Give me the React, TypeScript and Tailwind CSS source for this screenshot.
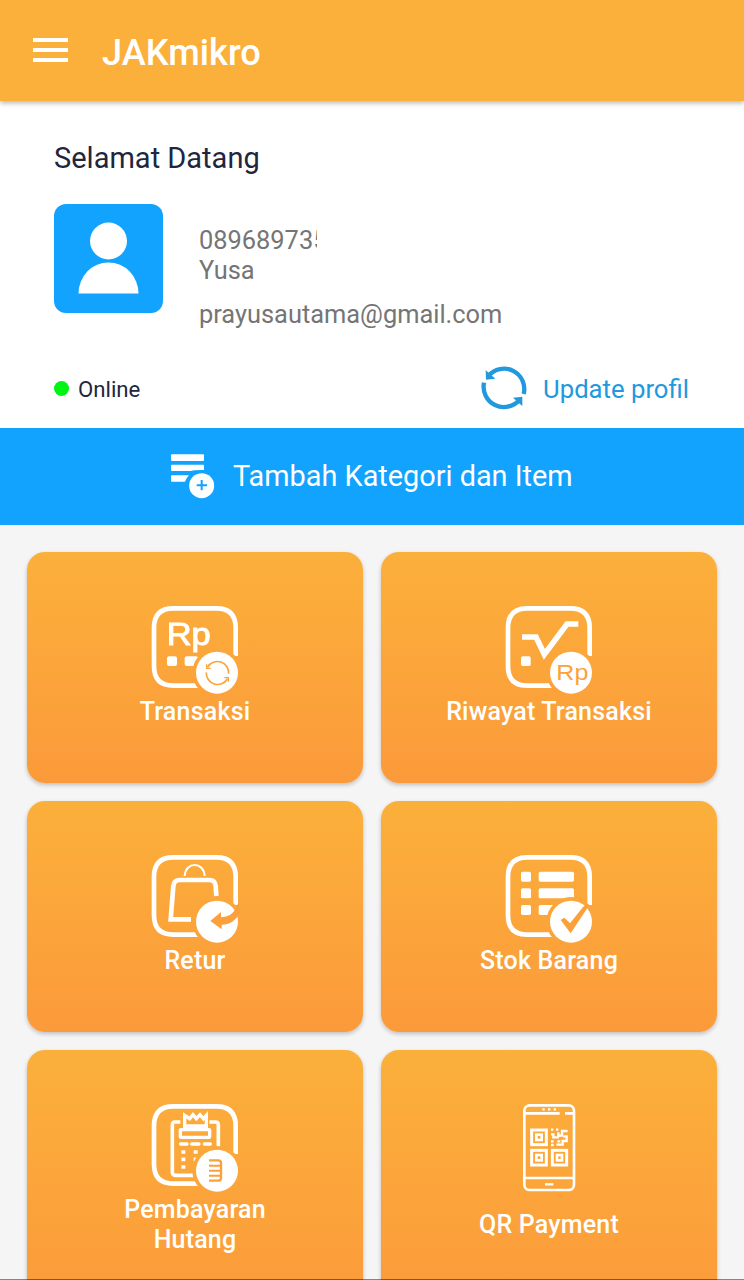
import type { ReactNode } from 'react';

type IconProps = { x: number; y: number; children: ReactNode };

function TileIcon({ x, y, children }: IconProps) {
  return (
    <svg className="size-[90px] shrink-0 overflow-visible" viewBox={`${x} ${y} 270 270`} fill="none" aria-hidden="true">
      {children}
    </svg>
  );
}

/* Rounded frame with a badge in its lower right corner; the content is cut away round the badge. */
function Badged({ id, x, y, children, badge }: IconProps & { id: string; badge: ReactNode }) {
  return (
    <TileIcon x={x} y={y}>
      <mask id={id} maskUnits="userSpaceOnUse" x={x} y={y} width="270" height="270">
        <rect x={x} y={y} width="270" height="270" fill="#fff" />
        <circle cx={x + 201} cy={y + 212} r="74" fill="#000" />
      </mask>
      <g mask={`url(#${id})`}>
        <path
          d={`M${x + 257} ${y + 162}V${y + 77}Q${x + 257} ${y + 19} ${x + 199} ${y + 19}H${x + 70}Q${x + 12} ${y + 19} ${x + 12} ${y + 77}V${y + 193}Q${x + 12} ${y + 251} ${x + 70} ${y + 251}H${x + 150}`}
          stroke="#fff"
          strokeWidth="14"
        />
        {children}
      </g>
      <circle cx={x + 201} cy={y + 212} r="63" fill="#fff" />
      {badge}
    </TileIcon>
  );
}

const TransaksiIcon = () => (
  <Badged
    id="cut-transaksi"
    x={30}
    y={21}
    badge={
      <g stroke="#fba33b" strokeWidth="5">
        <path d="M203 216A34 34 0 0 1 266 236" />
        <path d="M262 252A34 34 0 0 1 199 232" />
        <path d="M200 208v12h12M265 260v-12h-12" strokeWidth="4" />
      </g>
    }
  >
    <text x="80" y="150" fill="#fff" stroke="#fff" strokeWidth="3" className="font-['Liberation_Sans'] text-[94px]" textLength="132" lengthAdjust="spacingAndGlyphs">
      Rp
    </text>
    <rect x="81" y="184" width="30" height="29" rx="6" fill="#fff" />
    <rect x="134" y="184" width="40" height="29" rx="6" fill="#fff" />
  </Badged>
);

const RiwayatIcon = () => (
  <Badged
    id="cut-riwayat"
    x={27}
    y={21}
    badge={
      <text x="184" y="254" fill="#fba33b" className="font-['Liberation_Sans'] text-[68px]" textLength="96" lengthAdjust="spacingAndGlyphs">
        Rp
      </text>
    }
  >
    <path d="M81 126H123L148 178L216 87H250" stroke="#fff" strokeWidth="17" />
    <rect x="78" y="184" width="29" height="29" rx="5" fill="#fff" />
  </Badged>
);

const ReturIcon = () => (
  <Badged
    id="cut-retur"
    x={30}
    y={18}
    badge={<path d="M211 228L243 201V217Q277 214 286 191L296 172L300 202Q282 240 245 239V253Z" fill="#fba03a" />}
  >
    <path d="M153 223H92L100 123Q102 105 119 105H209Q225 105 227 123L229 153" stroke="#fff" strokeWidth="14" />
    <path d="M134 93C136 49 192 49 194 93" stroke="#fff" strokeWidth="6" />
  </Badged>
);

const StokIcon = () => (
  <Badged
    id="cut-stok"
    x={27}
    y={18}
    badge={<path d="M197 225L208 218L225 235L266 184L283 180L227 265Z" fill="#fba03a" />}
  >
    <g fill="#fff">
      <rect x="78" y="80" width="30" height="30" rx="5" />
      <rect x="131" y="80" width="106" height="30" rx="5" />
      <rect x="78" y="130" width="30" height="30" rx="5" />
      <rect x="131" y="130" width="106" height="30" rx="5" />
      <rect x="78" y="180" width="30" height="30" rx="5" />
      <rect x="131" y="180" width="50" height="30" rx="5" />
    </g>
  </Badged>
);

const HutangIcon = () => (
  <Badged
    id="cut-hutang"
    x={30}
    y={15}
    badge={
      <g stroke="#fba03a" strokeWidth="7">
        <path d="M207 196H235Q243 196 243 204V248Q243 257 234 257H207" />
        <path d="M207 212H241M207 227H241M207 242H241" strokeWidth="6" />
      </g>
    }
  >
    <g stroke="#fff">
      <path d="M121 81H105Q97 81 97 90V232Q97 241 106 241H165M208 81H227Q235 81 235 90V160" strokeWidth="11" />
      <path d="M134 102V61L149 71L159 59L169 71L180 59L190 71L199 61V102" strokeWidth="10" />
      <path d="M132 94H199" strokeWidth="13" />
      <rect x="121" y="104" width="88" height="23" rx="2" strokeWidth="10" />
      <path d="M122 147H141M155 147H177M193 147H211" strokeWidth="10" strokeLinecap="round" />
      <path d="M124 171H136M161 171H173M199 171H211M124 193H136M161 193H173M124 216H136" strokeWidth="11" />
    </g>
  </Badged>
);

const QrIcon = () => (
  <TileIcon x={27} y={15}>
    <g stroke="#fff">
      <rect x="88" y="31" width="149" height="254" rx="16" strokeWidth="8" />
      <path d="M88 55H194M210 55H237M88 249H237" strokeWidth="8" />
      <path d="M142 43H149M159 43H166M176 43H183" strokeWidth="7" />
      <path d="M150 268H175" strokeWidth="7" />
      <rect x="110" y="105" width="44" height="44" strokeWidth="9" />
      <rect x="124" y="119" width="16" height="16" strokeWidth="8" />
      <rect x="110" y="166" width="44" height="44" strokeWidth="9" />
      <rect x="124" y="180" width="16" height="16" strokeWidth="8" />
      <rect x="172" y="166" width="43" height="44" strokeWidth="9" />
      <rect x="186" y="180" width="15" height="16" strokeWidth="8" />
      <path d="M168 104H175M183 104H190M168 118H175V127H192M168 139H176M168 150H176M190 112V127M218 108H201V122H192M184 149H203V138H215V124H205M187 139H196" strokeWidth="7" />
    </g>
  </TileIcon>
);

function Tile({ icon, label, pad = 'px-4', height = 'h-[231px]', area = '' }: { icon: ReactNode; label: string; pad?: string; height?: string; area?: string }) {
  return (
    <button
      className={`flex flex-col items-center rounded-[18px] bg-linear-to-b from-[#fbb03b] to-[#fb9a3a] pt-[50px] text-white shadow-[0_2px_4px_rgba(0,0,0,0.22)] ${height} ${pad}`}
    >
      {icon}
      <span className={`mt-[5px] flex items-center text-center text-[25px] leading-[30px] font-medium tracking-[0.2px] ${area}`}>{label}</span>
    </button>
  );
}

export default function App() {
  return (
    <div className="relative flex h-[1280px] w-[744px] flex-col overflow-hidden bg-[#f5f5f5] font-['Roboto',sans-serif]">
      <header className="z-10 flex h-[101px] shrink-0 items-center bg-[#fbb03b] pl-[33px] text-white shadow-[0_2px_5px_rgba(0,0,0,0.3)]">
        <button className="-mt-px flex w-[35px] flex-col gap-[6px]" aria-label="Menu">
          <span className="h-1 w-full bg-white" />
          <span className="h-1 w-full bg-white" />
          <span className="h-1 w-full bg-white" />
        </button>
        <h1 className="mt-[5px] ml-[34px] text-[36.200px] leading-[44px] font-medium">JAKmikro</h1>
      </header>

      <section className="flex h-[327px] shrink-0 flex-col bg-white pt-[40px] pr-[55px] pl-[54px]">
        <h2 className="text-[29px] leading-[34px] text-[#20263e]">Selamat Datang</h2>
        <div className="mt-[29px] flex h-[130px]">
          <svg className="size-[109px] shrink-0" viewBox="0 0 109 109" aria-hidden="true">
            <rect width="109" height="109" rx="12" fill="#12a3ff" />
            <circle cx="54.5" cy="37" r="18.5" fill="#fff" />
            <path d="M24.5 89.500A30 31 0 0 1 84.5 89.500Z" fill="#fff" />
          </svg>
          <div className="ml-[36px] flex flex-col pt-[21px] text-[25.400px] leading-[30px] text-[#757575]">
            <div className="flex">
              <span>08968973</span>
              <span className="w-[4px] overflow-hidden">5</span>
            </div>
            <span>Yusa</span>
            <span className="mt-[14px]">prayusautama@gmail.com</span>
          </div>
        </div>
        <div className="mt-[31px] flex h-[46px] items-center">
          <span className="size-[15px] rounded-full bg-[#00f514]" />
          <span className="mt-[2px] ml-[9px] text-[22.200px] leading-[30px] text-[#20263e]">Online</span>
          <button className="ml-auto flex items-center text-[#2299dc]">
            <svg className="h-[46px] w-[46px]" viewBox="63 44 138 138" fill="none" aria-hidden="true">
              <g stroke="currentColor" strokeWidth="13">
                <path d="M85 77A61 61 0 0 1 191 131" />
                <path d="M178 149A61 61 0 0 1 72 97" />
              </g>
              <path d="M77 60L78 88L106 85L96 76L87 68ZM187 167L187 139L159 142L169 151L177 159Z" fill="currentColor" />
            </svg>
            <span className="mt-[2px] ml-[16px] text-[25.700px] leading-[32px]">Update profil</span>
          </button>
        </div>
      </section>

      <button className="flex h-[97px] shrink-0 items-center bg-[#12a3ff] pb-[2px] pl-[170px] text-white">
        <svg className="h-[46px] w-[46px]" viewBox="60 69 138 138" fill="none" aria-hidden="true">
          <rect x="63" y="73" width="99" height="20" rx="3" fill="#fff" />
          <path d="M66 104H159Q162 104 162 107V120Q134 119 121 123H66Q63 123 63 120V107Q63 104 66 104ZM66 136H117Q108 145 105 155H66Q63 155 63 152V139Q63 136 66 136Z" fill="#fff" />
          <circle cx="155" cy="167" r="37.5" fill="#fff" />
          <path d="M155 150V181M140 165.500H171" stroke="#12a3ff" strokeWidth="6" />
        </svg>
        <span className="ml-[17px] text-[28.850px] leading-[36px]">Tambah Kategori dan Item</span>
      </button>

      <main className="grid grid-cols-2 gap-[18px] px-[27px] pt-[27px]">
        <Tile icon={<TransaksiIcon />} label="Transaksi" />
        <Tile icon={<RiwayatIcon />} label="Riwayat Transaksi" />
        <Tile icon={<ReturIcon />} label="Retur" />
        <Tile icon={<StokIcon />} label="Stok Barang" />
        <Tile icon={<HutangIcon />} label="Pembayaran Hutang" pad="px-[80px]" height="h-[260px]" />
        <Tile icon={<QrIcon />} label="QR Payment" height="h-[260px]" area="min-h-[60px]" />
      </main>
      <div className="absolute inset-x-0 bottom-0 h-px bg-black/45" />
    </div>
  );
}
